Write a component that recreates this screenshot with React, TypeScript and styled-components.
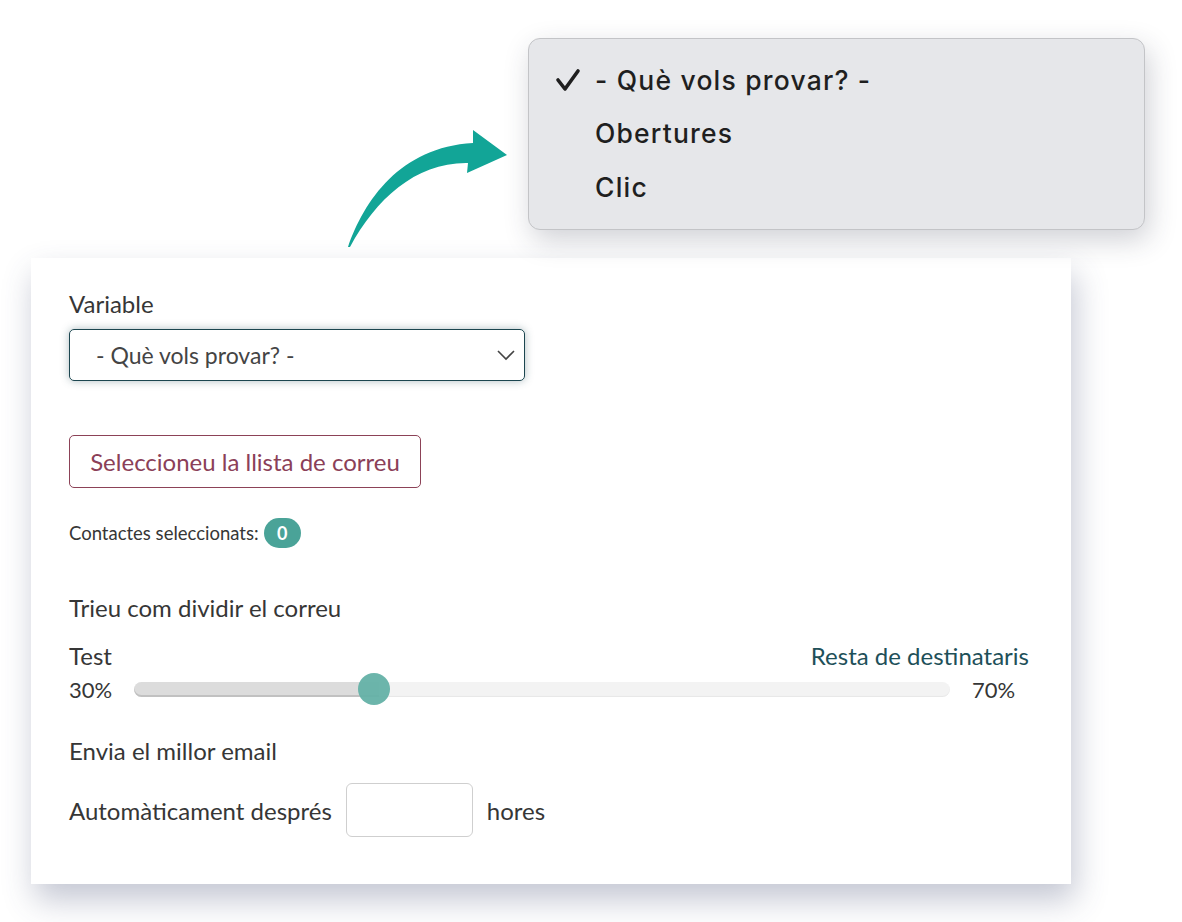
import styled, { createGlobalStyle } from 'styled-components';

const GlobalStyle = createGlobalStyle`
  body {
    margin: 0;
    background: #ffffff;
    font-family: Lato, 'Open Sans', sans-serif;
    color: #363636;
  }
`;

const Page = styled.div`
  width: 1182px;
  height: 922px;
  overflow: hidden;
`;

const Hint = styled.div`
  display: flex;
  align-items: flex-start;
  height: 258px;
  padding-top: 38px;
  box-sizing: border-box;
`;

const Arrow = styled.svg`
  align-self: flex-end;
  margin: 0 0 3px 340px;
  flex-shrink: 0;
`;

const Popup = styled.ul`
  margin: 0 0 0 13px;
  padding: 14px 0 15px;
  list-style: none;
  width: 617px;
  box-sizing: border-box;
  background: #e6e7ea;
  border: 1px solid #c3c4c7;
  border-radius: 12px;
  box-shadow: 4px 10px 28px rgba(40, 45, 70, 0.22);
  font-family: Inter, 'Noto Sans', sans-serif;
  font-size: 26.5px;
  font-weight: 500;
  letter-spacing: 1.2px;
  color: #1f1f1f;
`;

const PopupItem = styled.li`
  display: flex;
  align-items: center;
  height: 53.5px;
  padding-left: 26px;
`;

const Check = styled.span`
  width: 40px;
  display: flex;
  align-items: center;
`;

const Card = styled.div`
  margin-left: 31px;
  width: 1040px;
  height: 626px;
  box-sizing: border-box;
  padding: 32px 42px 0 38px;
  background: #ffffff;
  box-shadow: 4px 16px 30px rgba(60, 70, 110, 0.3);
  display: flex;
  flex-direction: column;
`;

const Label = styled.div<{ $gap?: number }>`
  font-size: 24px;
  line-height: 28px;
  margin-top: ${(p) => p.$gap ?? 0}px;
`;

const Select = styled.div`
  margin-top: 11px;
  width: 456px;
  height: 52px;
  box-sizing: border-box;
  border: 1px solid #1c4650;
  border-radius: 5px;
  box-shadow: 0 0 8px rgba(28, 70, 80, 0.35);
  display: flex;
  align-items: center;
  justify-content: space-between;
  padding: 0 8px 0 26px;
  font-size: 23px;
  color: #444444;
`;

const OutlineButton = styled.button`
  margin-top: 54px;
  align-self: flex-start;
  width: 352px;
  height: 53px;
  background: #ffffff;
  border: 1px solid #8c4257;
  border-radius: 5px;
  color: #8b4058;
  font-family: Lato, 'Open Sans', sans-serif;
  font-size: 24px;
  padding: 0;
`;

const Contacts = styled.div`
  margin-top: 30px;
  display: flex;
  align-items: center;
  gap: 5px;
  font-size: 18.5px;
`;

const Badge = styled.span`
  width: 37px;
  height: 30px;
  border-radius: 15px;
  background: #4aa398;
  color: #ffffff;
  font-weight: 700;
  font-size: 18px;
  display: flex;
  align-items: center;
  justify-content: center;
`;

const SplitLabels = styled.div`
  margin-top: 20px;
  display: flex;
  justify-content: space-between;
  font-size: 24px;
  line-height: 28px;
`;

const Rest = styled.span`
  color: #1e5059;
`;

const SliderRow = styled.div`
  margin-top: 3px;
  height: 32px;
  display: flex;
  align-items: center;
  font-size: 22px;
`;

const Pct = styled.span<{ $right?: boolean }>`
  width: ${(p) => (p.$right ? 79 : 65)}px;
  padding-left: ${(p) => (p.$right ? 22 : 0)}px;
  box-sizing: border-box;
`;

const Track = styled.div`
  position: relative;
  flex: 1;
  height: 15px;
  border-radius: 8px;
  background: #f3f3f3;
  box-shadow: inset 0 -1px 1px rgba(0, 0, 0, 0.05);
`;

const Fill = styled.div`
  height: 100%;
  border-radius: 8px 0 0 8px;
  background: #dcdcdc;
  box-shadow: inset 0 -2px 0 rgba(0, 0, 0, 0.12);
`;

const Thumb = styled.div`
  position: absolute;
  top: 50%;
  width: 32px;
  height: 32px;
  margin-top: -16px;
  border-radius: 50%;
  background: #64b1a7;
  opacity: 0.95;
`;

const AutoRow = styled.div`
  margin-top: 18px;
  display: flex;
  align-items: center;
  gap: 14px;
  font-size: 24px;
`;

const HoursInput = styled.div`
  width: 127px;
  height: 54px;
  box-sizing: border-box;
  border: 1px solid #cfcfcf;
  border-radius: 6px;
`;

const value = 30;

export default function App() {
  return (
    <Page>
      <GlobalStyle />
      <Hint>
        <Arrow width="175" height="130" viewBox="0 0 175 130">
          <path
            d="M8,122 C24,76 60,22 133,18 L133,5 L167,30 L127,48 L128,38 C76,37 36,74 10,122 Z"
            fill="#12a597"
          />
        </Arrow>
        <Popup>
          <PopupItem>
            <Check>
              <svg width="26" height="26" viewBox="0 0 26 26">
                <path d="M3,13 L10,22 L23,4" fill="none" stroke="#1f1f1f" strokeWidth="3.6" strokeLinecap="round" strokeLinejoin="round" />
              </svg>
            </Check>
            - Què vols provar? -
          </PopupItem>
          <PopupItem>
            <Check />
            Obertures
          </PopupItem>
          <PopupItem>
            <Check />
            Clic
          </PopupItem>
        </Popup>
      </Hint>
      <Card>
        <Label>Variable</Label>
        <Select>
          - Què vols provar? -
          <svg width="20" height="12" viewBox="0 0 20 12">
            <path d="M2,2 L10,10 L18,2" fill="none" stroke="#444" strokeWidth="1.6" />
          </svg>
        </Select>
        <OutlineButton>Seleccioneu la llista de correu</OutlineButton>
        <Contacts>
          Contactes seleccionats:
          <Badge>0</Badge>
        </Contacts>
        <Label $gap={46}>Trieu com dividir el correu</Label>
        <SplitLabels>
          <span>Test</span>
          <Rest>Resta de destinataris</Rest>
        </SplitLabels>
        <SliderRow>
          <Pct>{value}%</Pct>
          <Track>
            <Fill style={{ width: `${value}%` }} />
            <Thumb style={{ left: `calc(${value}% - 21px)` }} />
          </Track>
          <Pct $right>{100 - value}%</Pct>
        </SliderRow>
        <Label $gap={32}>Envia el millor email</Label>
        <AutoRow>
          Automàticament després
          <HoursInput />
          hores
        </AutoRow>
      </Card>
    </Page>
  );
}
